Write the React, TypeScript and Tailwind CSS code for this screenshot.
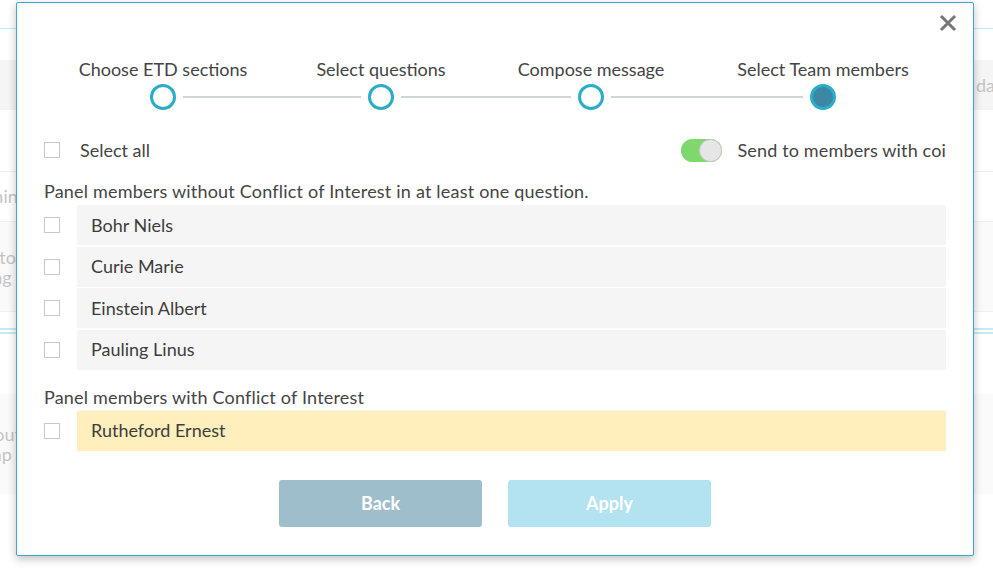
import React, { useState } from 'react';

const steps = ['Choose ETD sections', 'Select questions', 'Compose message', 'Select Team members'];
// label box widths so each label sits centred above its circle
const stepBoxes = ['w-[238px]', 'w-[198px]', 'w-[222px]', 'w-[242px]'];
const lineWidths = ['w-[178px]', 'w-[170px]', 'w-[192px]'];

const membersWithoutCoi = ['Bohr Niels', 'Curie Marie', 'Einstein Albert', 'Pauling Linus'];
const membersWithCoi = ['Rutheford Ernest'];

function Checkbox() {
    return <div className="w-[16px] h-[16px] border border-[#c9c9c9] bg-white shrink-0" />;
}

function MemberRow({ name, coi }: { name: string; coi?: boolean }) {
    return (
        <div className="flex items-center h-[40px]">
            <div className="w-[33px] shrink-0">
                <Checkbox />
            </div>
            <div
                className={`flex-1 h-full flex items-center pl-[14px] text-[#3d3d3d] ${coi ? 'bg-[#feefbd]' : 'bg-[#f5f5f5]'}`}
            >
                {name}
            </div>
        </div>
    );
}

function Background() {
    return (
        <div className="h-[568px] bg-white text-[18px] text-[#c4c4c4]">
            <div className="h-[29px] border-b border-[#c8e8f2]" />
            <div className="mt-[31px] h-[50px] bg-[#f5f5f5] flex items-center pl-[976px]">
                <span>da</span>
            </div>
            <div className="h-[62px] border-b border-[#f0f0f0]" />
            <div className="h-[50px] flex items-center border-b border-[#f0f0f0]">
                <span className="ml-[-36px]">Within</span>
            </div>
            <div className="h-[90px] bg-[#fafafa] flex flex-col justify-center leading-[20px] border-b border-[#f0f0f0]">
                <span className="ml-[-15px]">into</span>
                <span className="ml-[-30px]">using</span>
            </div>
            <div className="mt-[16px] h-[6px] border-y-2 border-[#c8e8f2]" />
            <div className="mt-[60px] h-[100px] bg-[#fafafa] flex flex-col justify-center leading-[20px]">
                <span className="ml-[-28px]">About</span>
                <span className="ml-[-22px]">map</span>
            </div>
        </div>
    );
}

export default function App() {
    const [sendCoi, setSendCoi] = useState(true);

    return (
        <div className="relative w-[993px] h-[568px] overflow-hidden" style={{ fontFamily: 'Lato, "Noto Sans", sans-serif' }}>
            <Background />

            {/* Modal */}
            <div className="absolute left-[16px] top-[2px] w-[958px] h-[554px] bg-white border border-[#3aa7d6] rounded-[2px] shadow-[0_3px_8px_rgba(0,0,0,0.25)] px-[27px] text-[18px] text-[#444]">
                <button className="absolute right-[16px] top-[11px] w-[18px] h-[18px] text-[#777]">
                    <svg viewBox="0 0 18 18" width="18" height="18">
                        <path d="M3 3 L15 15 M15 3 L3 15" stroke="currentColor" strokeWidth="3" strokeLinecap="square" />
                    </svg>
                </button>

                {/* Stepper */}
                <div className="mt-[55px] flex leading-[22px]">
                    {steps.map((s, i) => (
                        <div key={s} className={`${stepBoxes[i]} text-center whitespace-nowrap`}>
                            {s}
                        </div>
                    ))}
                </div>
                <div className="mt-[4px] ml-[106px] flex items-center">
                    {steps.map((s, i) => (
                        <React.Fragment key={s}>
                            <div
                                className={`w-[26px] h-[26px] rounded-full border-[3px] border-[#2badc8] shrink-0 ${i === 3 ? 'bg-[#3c86a6]' : 'bg-white'}`}
                            />
                            {i < 3 && <div className={`${lineWidths[i]} mx-[7px] h-[2px] bg-[#d2d5d8]`} />}
                        </React.Fragment>
                    ))}
                </div>

                {/* Select all / toggle */}
                <div className="mt-[28px] flex items-center h-[24px]">
                    <Checkbox />
                    <span className="ml-[20px]">Select all</span>
                    <div className="flex-1" />
                    <button
                        onClick={() => setSendCoi(!sendCoi)}
                        className={`relative w-[41px] h-[23px] rounded-full ${sendCoi ? 'bg-[#7ed86b]' : 'bg-[#e0e0e0]'}`}
                    >
                        <span
                            className={`absolute top-0 w-[23px] h-[23px] rounded-full bg-[#e6e6e6] border border-[#c9c9c9] ${sendCoi ? 'right-0' : 'left-0'}`}
                        />
                    </button>
                    <span className="ml-[15px] whitespace-nowrap tracking-[0.15px]">Send to members with coi</span>
                </div>

                <div className="mt-[18px] leading-[22px] tracking-[0.2px]">
                    Panel members without Conflict of Interest in at least one question.
                </div>
                <div className="mt-[3px] flex flex-col gap-[1.6px]">
                    {membersWithoutCoi.map((m) => (
                        <MemberRow key={m} name={m} />
                    ))}
                </div>

                <div className="mt-[16px] leading-[22px] tracking-[0.2px]">Panel members with Conflict of Interest</div>
                <div className="mt-[3px]">
                    {membersWithCoi.map((m) => (
                        <MemberRow key={m} name={m} coi />
                    ))}
                </div>

                <div className="mt-[29px] flex justify-center gap-[26px]">
                    <button className="w-[203px] h-[47px] rounded-[3px] bg-[#9fbecb] text-white font-bold">Back</button>
                    <button className="w-[203px] h-[47px] rounded-[3px] bg-[#b3e2f0] text-white font-bold">Apply</button>
                </div>
            </div>
        </div>
    );
}
